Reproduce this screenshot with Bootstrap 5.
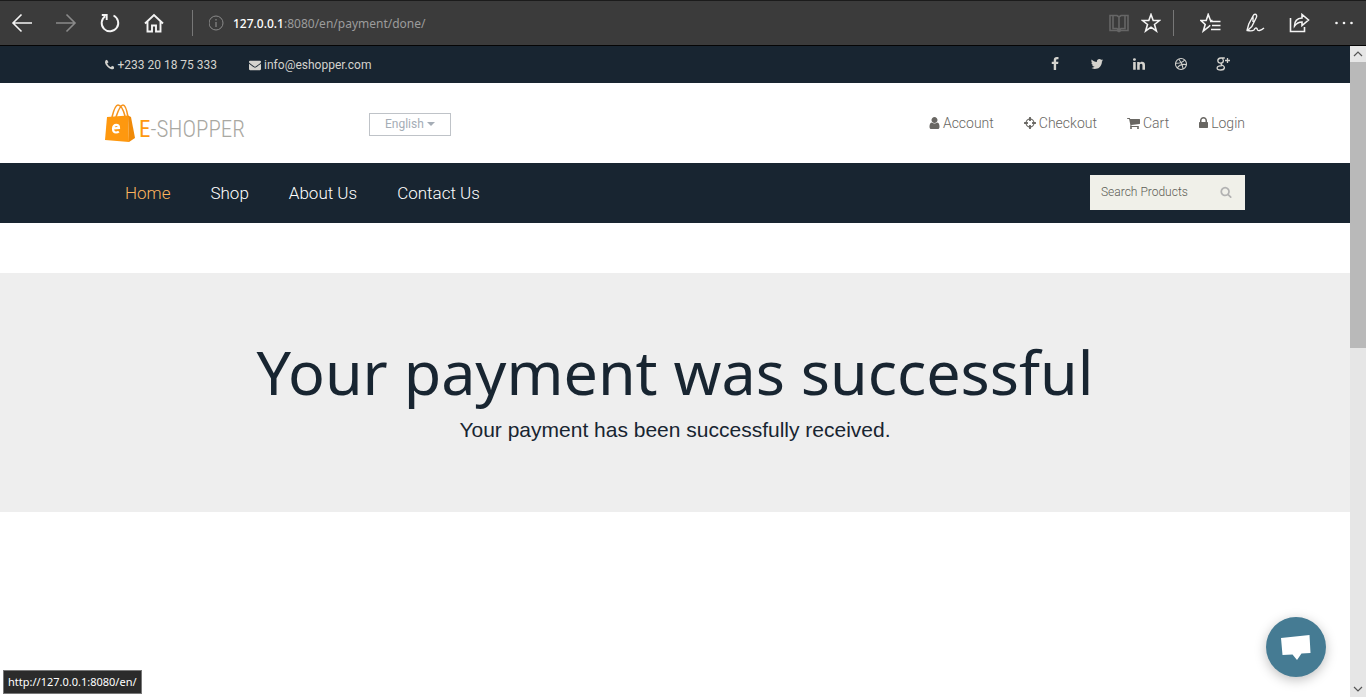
<!DOCTYPE html>
<html lang="en">
<head>
<meta charset="utf-8">
<meta name="viewport" content="width=device-width, initial-scale=1">
<title>E-Shopper</title>
<link href="https://cdn.jsdelivr.net/npm/bootstrap@5.3.0/dist/css/bootstrap.min.css" rel="stylesheet">
<style>
  :root { --navy: #182531; }
  body { font-family: Roboto, "Liberation Sans", sans-serif; font-weight: 300; background: #fff; }
  a { text-decoration: none; color: inherit; }
  button { background: none; border: 0; padding: 0; color: inherit; }
  svg { display: block; flex: none; }
  .fa-i { height: 14px; fill: currentColor; }

  .browser-bar { height: 46px; background: #3b3b3b; border-top: 1px solid #1b1b1b; border-bottom: 1px solid #050505; color: #f4f4f4; font-family: "Noto Sans", sans-serif; }
  .browser-bar svg { fill: none; stroke: currentColor; stroke-width: 1.6; }
  .nav-tools { gap: 22px; padding-left: 11px; padding-right: 3px; }
  .right-tools { padding-right: 12px; }
  .tool-group { margin-left: 18px; }
  .faded { color: #8a8a8a; }
  .dimmer { color: #666; }
  .rule { width: 1px; height: 26px; background: #777; }
  .address { font-size: 12px; line-height: 18px; font-weight: 400; color: #9c9c9c; padding-top: 2px; }
  .address b { color: #fff; font-weight: 500; }

  .site { min-width: 0; }
  .site .container { max-width: 1170px; padding: 0 15px; }
  .icon-text { display: flex; align-items: center; gap: 3px; }
  .contact-strip { height: 37px; background: var(--navy); color: #d4d3ce; font-size: 12px; font-weight: 400; }
  .contact-list { gap: 32px; }
  .contact-list .fa-i { height: 12px; }
  .social { gap: 28px; padding-right: 15px; padding-bottom: 1px; }
  .brand-row { height: 80px; }
  .brand-name { font-family: "Roboto Condensed", "Liberation Sans Narrow", Roboto, sans-serif; font-size: 23px; line-height: 24px; font-weight: 300; color: #a9a8a2; padding-top: 14px; margin-left: 3px; }
  .brand-name span { color: #fe980f; font-weight: 400; }
  .lang { width: 82px; height: 23px; border: 1px solid #bfc3c8; color: #a5adb6; font-size: 12px; line-height: 21px; display: block; }
  .lang::after { border-top-width: 4px; border-left-width: 4px; border-right-width: 4px; margin-left: 3px; vertical-align: 2px; }
  .lang-wrap { margin-left: 124px; margin-top: 2px; }
  .account-links { gap: 30px; font-size: 14px; line-height: 20px; color: #696763; }
  .main-nav { min-height: 60px; background: var(--navy); color: #fff; font-size: 17px; }
  .main-nav .links { gap: 40px; padding-left: 20px; padding-top: 1px; }
  .main-nav .current { color: #fdb45e; }
  .search-box { width: 155px; height: 35px; margin-bottom: 2px; background: #f0f0e9; }
  .search-box input { min-width: 0; width: 110px; border: 0; background: transparent; font-size: 12px; font-weight: 300; color: #55554f; padding: 0 0 0 11px; outline: 0; }
  .search-box input::placeholder { color: #5c5c55; opacity: 1; }
  .search-box button { color: #b2b2b2; margin-left: 20px; }
  .search-box .fa-i { height: 12px; }

  .notice { margin-top: 50px; padding: 61px 15px 67px; background: #eee; color: var(--navy); }
  .notice h1 { font-family: "Noto Sans", sans-serif; font-size: 61px; line-height: 76px; font-weight: 400; margin: 0; }
  .notice p { font-family: "Liberation Sans", sans-serif; font-size: 21px; line-height: 31px; font-weight: 400; margin: 4px 0 0; }

  .scroll-track { width: 16px; background: #e6e6e6; color: #555; }
  .scroll-track svg { fill: none; stroke: currentColor; stroke-width: 1.2; }
  .scroll-thumb { height: 44%; background: #b9b9b9; }
  .chat-btn { right: 40px; bottom: 20px; width: 60px; height: 60px; background: #457b93; box-shadow: 0 3px 12px rgba(0,0,0,.25); }
  .status-tip { left: 3px; bottom: 3px; height: 24px; padding: 0 4px; border: 1px solid #777; background: #2b2b2b; color: #fff; font-family: "Noto Sans", sans-serif; font-size: 11px; line-height: 22px; font-weight: 400; }
</style>
<script src="https://cdn.jsdelivr.net/npm/bootstrap@5.3.0/dist/js/bootstrap.bundle.min.js"></script>
</head>
<body>
<div class="d-flex flex-column vh-100 overflow-hidden">
  <div class="browser-bar d-flex align-items-center flex-shrink-0">
    <div class="nav-tools d-flex align-items-center">
      <button aria-label="Back"><svg width="22" height="22" viewBox="0 0 22 22"><path d="M21 11H2M10.500 2.500L2 11l8.500 8.500"/></svg></button>
      <button class="faded" aria-label="Forward"><svg width="22" height="22" viewBox="0 0 22 22"><path d="M1 11h19M11.500 2.500L20 11l-8.500 8.500"/></svg></button>
      <button aria-label="Refresh"><svg width="22" height="22" viewBox="0 0 22 22"><path stroke-width="1.900" d="M14.500 3.500A8.300 8.300 0 1 1 6.200 4.200M2.800 3h4.900v5"/></svg></button>
      <button aria-label="Home"><svg width="22" height="22" viewBox="0 0 22 22"><path stroke-width="1.900" d="M2 11.500L11 3l9 8.500M4.500 9.500v10H9v-6h4v6h4.500v-10"/></svg></button>
    </div>
    <div class="rule ms-4 me-3"></div>
    <div class="d-flex align-items-center gap-2 flex-grow-1">
      <svg class="faded" width="16" height="16" viewBox="0 0 16 16"><circle cx="7" cy="8" r="7" stroke-width="1"/><path stroke-width="1.200" d="M7 7v5M7 4v1.500"/></svg>
      <div class="address"><b>127.0.0.1</b>:8080/en/payment/done/</div>
    </div>
    <div class="right-tools d-flex align-items-center gap-2">
      <button class="dimmer me-1" aria-label="Reading view"><svg width="20" height="20" viewBox="0 0 20 20"><path d="M1 2.500h7l2 1.500 2-1.500h7v15H12l-2 1-2-1H1zM10 4v14M4 3v12.500h4l2 2 2-2h4V3"/></svg></button>
      <button aria-label="Favorite"><svg width="20" height="20" viewBox="0 0 20 20"><path d="M10 1.500l2.200 6h6.300l-5 4 1.900 6.500L10 14.200 4.600 18l1.900-6.500-5-4h6.300z"/></svg></button>
      <div class="rule ms-1"></div>
      <div class="tool-group d-flex align-items-center gap-4">
        <button aria-label="Hub"><svg width="21" height="20" viewBox="0 0 21 20"><path d="M12.500 7.500h-2L8.200 1.500 6.200 7.500H1l4.200 4-1.900 6.500 5-3.800M10 8.500h10.500M12 12.500h8.500M11 16.500h9.500M8.200 14.200l2-2"/></svg></button>
        <button aria-label="Web note"><svg width="20" height="20" viewBox="0 0 20 20"><path stroke-width="1.400" d="M2 17.500L3.800 11 8 3q1.200-2.300 2.800-1.600 1.500.9.400 3.400L6.800 13.500 2.500 17.500q4.500 1 6.500-.5 1.500-3 3-1.500.3 2.500 2.500 2t4.500-2.500M8 3v6"/></svg></button>
        <button aria-label="Share"><svg width="21" height="20" viewBox="0 0 21 20"><path d="M1.500 5v13.500h14V14M5.500 13q0-7.500 7.500-8V1.500L19.500 7 13 12.500V9q-4.500 0-7.500 4z"/></svg></button>
        <button aria-label="More"><svg width="20" height="20" viewBox="0 0 20 20"><g fill="currentColor" stroke="none"><circle cx="2.500" cy="10" r="1.300"/><circle cx="10" cy="10" r="1.300"/><circle cx="17.500" cy="10" r="1.300"/></g></svg></button>
      </div>
    </div>
  </div>

  <div class="d-flex flex-grow-1">
    <div class="site flex-grow-1">
      <div class="contact-strip">
        <div class="container h-100 d-flex justify-content-between align-items-center">
          <div class="contact-list d-flex">
            <a href="#" class="icon-text"><svg class="fa-i" viewBox="192 0 1408 1792"><path d="M1600 1240q0 27-10 70.500t-21 68.500q-21 50-122 106-94 51-186 51-27 0-53-3.500t-57.500-12.500-47-14.500-55.500-20.500-49-18q-98-35-175-83-127-79-264-216t-216-264q-48-77-83-175-3-9-18-49t-20.500-55.500-14.500-47-12.500-57.500-3.500-53q0-92 51-186 56-101 106-122 25-11 68.500-21t70.500-10q14 0 21 3 18 6 53 76 11 19 30 54t35 63.500 31 53.500q3 4 17.500 25t21.500 35.500 7 28.500q0 20-28.500 50t-62 55-62 53-28.500 46q0 9 5 22.500t8.500 20.500 14 24 11.500 19q76 137 174 235t235 174q2 1 19 11.500t24 14 20.500 8.500 22.500 5q18 0 46-28.500t53-62 55-62 50-28.500q14 0 28.500 7t35.500 21.500 25 17.500q25 15 53.500 31t63.500 35 54 30q70 35 76 53 3 7 3 21z"/></svg>+233 20 18 75 333</a>
            <a href="#" class="icon-text"><svg class="fa-i" viewBox="0 0 1792 1792"><path d="M1792 710v794q0 66-47 113t-113 47h-1472q-66 0-113-47t-47-113v-794q44 49 101 87 362 246 497 345 57 42 92.500 65.500t94.500 48 110 24.500h2q51 0 110-24.500t94.500-48 92.500-65.500q170-123 498-345 57-39 100-87zm0-294q0 79-49 151t-122 123q-376 261-468 325-10 7-42.500 31t-54 38.500-52 32.500-57.500 27-50 9h-2q-23 0-50-9t-57.500-27-52-32.500-54-38.500-42.500-31q-91-64-262-182.500t-205-142.500q-62-42-117-115.500t-55-136.500q0-78 41.500-130t118.500-52h1472q65 0 112.500 47t47.500 113z"/></svg>info@eshopper.com</a>
          </div>
          <div class="social d-flex">
            <a href="#" aria-label="Facebook"><svg class="fa-i" viewBox="0 0 1792 1792"><path d="M1343 12v264h-157q-86 0-116 36t-30 108v189h293l-39 296h-254v759h-306v-759h-255v-296h255v-218q0-186 104-288.500t277-102.500q147 0 228 12z"/></svg></a>
            <a href="#" aria-label="Twitter"><svg class="fa-i" viewBox="0 0 1792 1792"><path d="M1684 408q-67 98-162 167 1 14 1 42 0 130-38 259.500t-115.500 248.500-184.500 210.500-258 146-323 54.500q-271 0-496-145 35 4 78 4 225 0 401-138-105-2-188-64.500t-114-159.500q33 5 61 5 43 0 85-11-112-23-185.500-111.500t-73.500-205.500v-4q68 38 146 41-66-44-105-115t-39-154q0-88 44-163 121 149 294.500 238.500t371.500 99.500q-8-38-8-74 0-134 94.500-228.500t228.500-94.500q140 0 236 102 109-21 205-78-37 115-142 178 93-10 186-50z"/></svg></a>
            <a href="#" aria-label="LinkedIn"><svg class="fa-i" viewBox="0 0 1792 1792"><path d="M477 625v991h-330v-991h330zm21-306q1 73-50.500 122t-135.500 49h-2q-82 0-132-49t-50-122q0-74 51.500-122.500t134.500-48.500 133 48.500 51 122.500zm1166 729v568h-329v-530q0-105-40.500-164.500t-126.500-59.500q-63 0-105.500 34.500t-63.500 85.500q-11 30-11 81v553h-329q2-399 2-647t-1-296l-1-48h329v144h-2q20-32 41-56t56.500-52 87-43.500 114.500-15.500q171 0 275 113.500t104 332.500z"/></svg></a>
            <a href="#" aria-label="Dribbble"><svg width="14" height="14" viewBox="0 0 14 14" fill="none" stroke="currentColor" stroke-width="1.100"><circle cx="7" cy="7" r="5.500"/><path d="M4.800 2Q8.500 6.500 9.200 12M1.500 6.300Q8 6.500 10.700 3M3.200 11Q6 6.500 12.400 7.600"/></svg></a>
            <a href="#" aria-label="Google Plus"><svg width="14" height="14" viewBox="0 0 14 14" fill="none" stroke="currentColor" stroke-width="1.300"><path d="M8.800 1H4.800Q1.800 1.300 1.800 3.800 2 6.200 4.500 6.200q2.900 0 2.900-2.700Q7.200 1.700 5.500 1M5.500 6q-1 1 .4 2 2.800 1.200 2.500 3-.4 2-3.600 2-3.700 0-3.700-2 .3-2.300 5-2.300M11.500 1v5M9 3.500h5"/></svg></a>
          </div>
        </div>
      </div>

      <header class="brand-row">
        <div class="container h-100 d-flex align-items-center">
          <a href="#" class="d-flex align-items-center">
            <svg width="31" height="38" viewBox="0 0 31 38"><path d="M7 13Q10 1 13 1q4 0 7 11M11 13Q15 1 18 1q3 0 5 12" fill="none" stroke="#f7941d" stroke-width="1.600"/><path d="M2 13l21-1.500L24 38 0 36z" fill="#fe980f"/><path d="M23 11.500l3 1.500 4 21-6 4z" fill="#f08a08"/><path d="M8 24.500l6-.6q0-3-2.800-3T8 24.500q0 4 3 4 1.800 0 2.800-1" fill="none" stroke="#fff" stroke-width="2.200"/></svg>
            <span class="brand-name"><span>E</span>-SHOPPER</span>
          </a>
          <div class="lang-wrap"><button class="lang dropdown-toggle" data-bs-toggle="dropdown">English</button>
            <ul class="dropdown-menu"><li><a class="dropdown-item" href="#">English</a></li></ul></div>
          <nav class="account-links d-flex ms-auto">
            <a href="#" class="icon-text"><svg class="fa-i" viewBox="192 0 1408 1792"><path d="M1536 1399q0 109-62.500 187t-150.500 78h-854q-88 0-150.500-78t-62.500-187q0-85 8.500-160.500t31.500-152 58.500-131 94-89 134.500-34.500q131 128 313 128t313-128q76 0 134.500 34.500t94 89 58.500 131 31.500 152 8.500 160.500zm-256-887q0 159-112.500 271.500t-271.500 112.500-271.500-112.500-112.500-271.500 112.500-271.500 271.500-112.500 271.500 112.500 112.500 271.500z"/></svg>Account</a>
            <a href="#" class="icon-text"><svg class="fa-i" viewBox="128 0 1536 1792"><path d="M1325 1024h-109q-26 0-45-19t-19-45v-128q0-26 19-45t45-19h109q-32-108-112.500-188.500t-188.500-112.500v109q0 26-19 45t-45 19h-128q-26 0-45-19t-19-45v-109q-108 32-188.500 112.500t-112.500 188.500h109q26 0 45 19t19 45v128q0 26-19 45t-45 19h-109q32 108 112.500 188.500t188.500 112.500v-109q0-26 19-45t45-19h128q26 0 45 19t19 45v109q108-32 188.500-112.500t112.500-188.500zm339-192v128q0 26-19 45t-45 19h-143q-37 161-154.500 278.500t-278.500 154.500v143q0 26-19 45t-45 19h-128q-26 0-45-19t-19-45v-143q-161-37-278.500-154.500t-154.500-278.500h-143q-26 0-45-19t-19-45v-128q0-26 19-45t45-19h143q37-161 154.500-278.500t278.500-154.500v-143q0-26 19-45t45-19h128q26 0 45 19t19 45v143q161 37 278.500 154.500t154.500 278.500h143q26 0 45 19t19 45z"/></svg>Checkout</a>
            <a href="#" class="icon-text"><svg class="fa-i" viewBox="64 0 1664 1792"><path d="M704 1536q0 52-38 90t-90 38-90-38-38-90 38-90 90-38 90 38 38 90zm896 0q0 52-38 90t-90 38-90-38-38-90 38-90 90-38 90 38 38 90zm128-1088v512q0 24-16.500 42.500t-40.500 21.500l-1044 122q13 60 13 70 0 16-24 64h920q26 0 45 19t19 45-19 45-45 19h-1024q-26 0-45-19t-19-45q0-11 8-31.500t16-36 21.500-40 15.500-29.500l-177-823h-204q-26 0-45-19t-19-45 19-45 45-19h256q16 0 28.500 6.500t19.500 15.500 13 24.500 8 26 5.500 29.500 4.500 26h1201q26 0 45 19t19 45z"/></svg>Cart</a>
            <a href="#" class="icon-text"><svg class="fa-i" viewBox="320 0 1152 1792"><path d="M640 768h512v-192q0-106-75-181t-181-75-181 75-75 181v192zm832 96v576q0 40-28 68t-68 28h-960q-40 0-68-28t-28-68v-576q0-40 28-68t68-28h32v-192q0-184 132-316t316-132 316 132 132 316v192h32q40 0 68 28t28 68z"/></svg>Login</a>
          </nav>
        </div>
      </header>

      <div class="main-nav d-flex">
        <div class="container d-flex align-items-center justify-content-between">
          <nav class="links d-flex">
            <a class="current" href="#">Home</a><a href="#">Shop</a><a href="#">About Us</a><a href="#">Contact Us</a>
          </nav>
          <form class="search-box d-flex align-items-center">
            <input type="text" placeholder="Search Products" aria-label="Search Products">
            <button type="button" aria-label="Search"><svg class="fa-i" viewBox="0 0 1792 1792"><path d="M1216 832q0-185-131.500-316.500t-316.500-131.500-316.500 131.500-131.500 316.500 131.500 316.500 316.500 131.500 316.500-131.500 131.500-316.500zm512 832q0 52-38 90t-90 38q-54 0-90-38l-343-342q-179 124-399 124-143 0-273.500-55.500t-225-150-150-225-55.500-273.500 55.500-273.500 150-225 225-150 273.500-55.500 273.500 55.500 225 150 150 225 55.500 273.500q0 220-124 399l343 343q37 37 37 90z"/></svg></button>
          </form>
        </div>
      </div>

      <main class="notice text-center">
        <h1>Your payment was successful</h1>
        <p>Your payment has been successfully received.</p>
      </main>
    </div>
    <div class="scroll-track d-flex flex-column flex-shrink-0">
      <svg width="16" height="16" viewBox="0 0 16 16"><path d="M4 10l4-4 4 4"/></svg>
      <div class="scroll-thumb"></div>
      <svg class="mt-auto" width="16" height="16" viewBox="0 0 16 16"><path d="M4 6l4 4 4-4"/></svg>
    </div>
  </div>
</div>
<button class="chat-btn position-fixed rounded-circle d-flex align-items-center justify-content-center" aria-label="Open chat"><svg width="30" height="28" viewBox="0 0 30 28"><path d="M0 5l28.500-3 1 18-9 .6-4.500 6.400-4.500-5.500L1.500 22z" fill="#fff"/></svg></button>
<div class="status-tip position-fixed">http://127.0.0.1:8080/en/</div>
</body>
</html>
